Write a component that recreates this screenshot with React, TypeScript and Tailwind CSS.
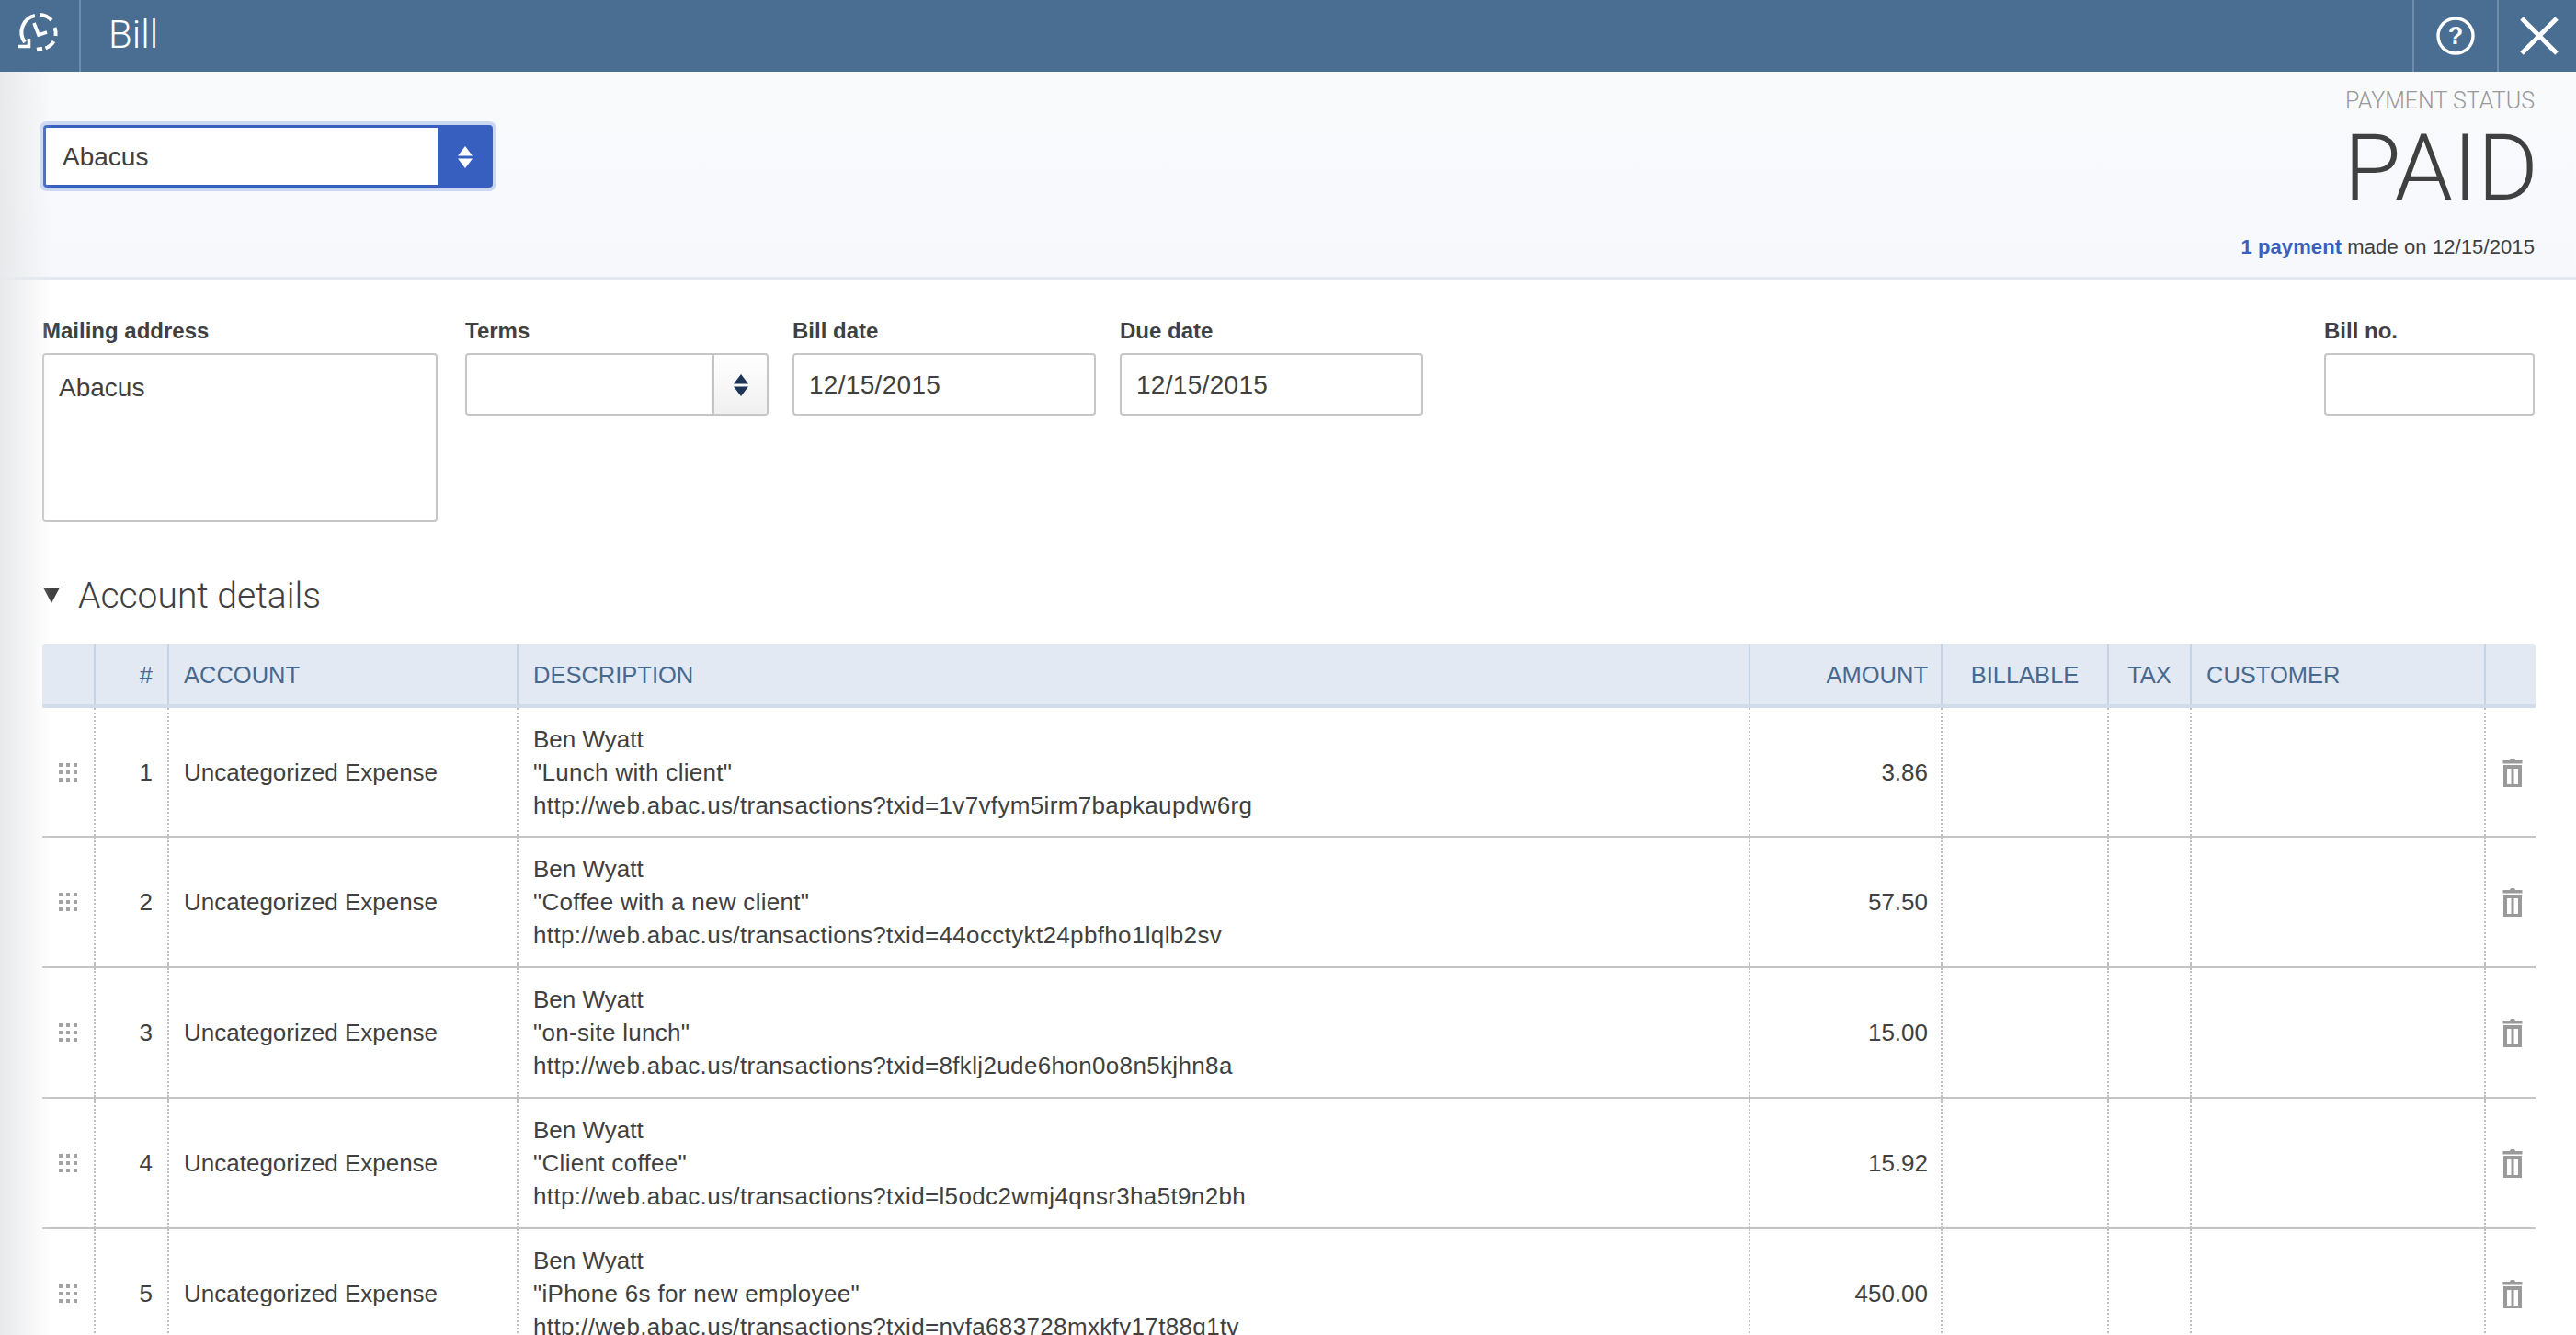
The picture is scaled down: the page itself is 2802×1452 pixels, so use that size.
const sans = "font-['Liberation_Sans',Arial,sans-serif]";

const rows = [
  { n: 1, note: '"Lunch with client"', id: "1v7vfym5irm7bapkaupdw6rg", amount: "3.86" },
  { n: 2, note: '"Coffee with a new client"', id: "44occtykt24pbfho1lqlb2sv", amount: "57.50" },
  { n: 3, note: '"on-site lunch"', id: "8fklj2ude6hon0o8n5kjhn8a", amount: "15.00" },
  { n: 4, note: '"Client coffee"', id: "l5odc2wmj4qnsr3ha5t9n2bh", amount: "15.92" },
  { n: 5, note: '"iPhone 6s for new employee"', id: "nyfa683728mxkfy17t88q1tv", amount: "450.00" },
];

function Logo() {
  return (
    <svg width="80" height="70" viewBox="0 0 80 70" fill="none" stroke="white" strokeWidth="4">
      <path d="M17 41 A18.5 18.5 0 0 1 28 12" />
      <path d="M33 11 A18.5 18.5 0 0 1 46 17" />
      <path d="M49.5 25 A18.5 18.5 0 0 1 50.5 34" />
      <path d="M48.5 40 A18.5 18.5 0 0 1 39.5 47.5" />
      <path d="M30 49 L36 48" strokeWidth="4.5" />
      <path d="M10 45.5 H21.5 V37" strokeWidth="3.6" />
      <path d="M27 20 L32 33 L41 30" strokeWidth="3.6" />
    </svg>
  );
}

function UpDown({ className }: { className: string }) {
  return (
    <svg width="16" height="24" viewBox="0 0 16 24" className={className}>
      <path d="M8 0 L16 10.5 H0 Z M0 13.5 H16 L8 24 Z" fill="currentColor" />
    </svg>
  );
}

function Grip() {
  return (
    <div className="grid grid-cols-3 gap-1 w-5 mx-auto">
      {Array.from({ length: 9 }).map((_, i) => (
        <span key={i} className="w-1 h-1 bg-[#a3a3a3]" />
      ))}
    </div>
  );
}

function Trash() {
  return (
    <svg width="22" height="32" viewBox="0 0 22 32" className="mx-auto">
      <path d="M0.5 3 H8 L9 1 H13 L14 3 H21.5 V6.5 H0.5 Z" fill="#9a9a9a" />
      <path
        fillRule="evenodd"
        d="M1 8 H21 V32 H1 Z M5 12 V29 H9.5 V12 Z M12.5 12 V29 H17 V12 Z"
        fill="#9a9a9a"
      />
    </svg>
  );
}

function Field({ label, value, className }: { label: string; value?: string; className: string }) {
  return (
    <div className={className}>
      <div className="pt-[1px] h-[28px] text-[24px] leading-[28px] font-bold text-[#404040] mb-[11px]">{label}</div>
      <div className="h-[68px] px-[16px] pt-[1px] flex items-center bg-white border-2 border-[#c6c6c6] rounded text-[28px] tracking-[0.3px] text-[#404040]">
        {value}
      </div>
    </div>
  );
}

export default function App() {
  return (
    <div className={`relative w-[2802px] h-[1452px] overflow-hidden bg-white text-[#404040] ${sans}`}>
      {/* Top bar */}
      <div className="flex h-[78px] bg-[#4a6d92] text-white">
        <div className="w-[88px] border-r-2 border-[#6f8cab] pl-[10px] pt-[5px]">
          <Logo />
        </div>
        <div className="pl-[30px] pb-[3px] flex items-center text-[42px] font-light font-['Roboto',sans-serif]">Bill</div>
        <div className="ml-auto w-[94px] border-l-2 border-r-2 border-[#6f8cab] flex items-center justify-center">
          <svg width="42" height="42" viewBox="0 0 42 42">
            <circle cx="21" cy="21" r="19" fill="none" stroke="white" strokeWidth="3.4" />
            <text x="21" y="30" textAnchor="middle" fontSize="27" fontWeight="700" fill="white" fontFamily="Liberation Sans">?</text>
          </svg>
        </div>
        <div className="w-[84px] flex items-center justify-center pl-[4px]">
          <svg width="42" height="42" viewBox="0 0 42 42" stroke="white" strokeWidth="5">
            <path d="M2 2 L40 40 M40 2 L2 40" />
          </svg>
        </div>
      </div>

      {/* Vendor and payment status */}
      <div className="flex justify-between h-[226px] pl-[47px] pr-[45px] bg-gradient-to-b from-[#f9fafc] to-[#f6f8fb] border-b-[3px] border-[#e3e9f1]">
        <div className="mt-[58px] flex w-[489px] h-[68px] rounded border-[3px] border-[#375fbf] ring-4 ring-[#cbd8f2] bg-white">
          <div className="flex-1 flex items-center pl-[18px] pt-[1px] text-[28px]">Abacus</div>
          <div className="w-[57px] flex items-center justify-center pl-[2px] pt-[1px] bg-[#375fbf]">
            <UpDown className="text-white" />
          </div>
        </div>
        <div className="flex flex-col items-end pt-[17px]">
          <div className="text-[25px] leading-[30px] font-light text-[#999999] font-['Roboto',sans-serif]">PAYMENT STATUS</div>
          <div className="mt-[10px] mr-[-4px] text-[101px] leading-[96px] font-light text-[#404040] font-['Roboto',sans-serif]">PAID</div>
          <div className="mt-[24px] text-[22px] leading-[28px] tracking-[0.1px]">
            <span className="font-bold text-[#3a5fbd]">1 payment</span> made on 12/15/2015
          </div>
        </div>
      </div>

      {/* Bill fields */}
      <div className="flex pt-[41px] pl-[46px] pr-[45px] gap-[26px]">
        <div className="w-[430px] mr-[4px]">
          <div className="pt-[1px] h-[28px] text-[24px] leading-[28px] font-bold mb-[11px]">Mailing address</div>
          <div className="h-[184px] px-[16px] py-[20px] border-2 border-[#c6c6c6] rounded text-[28px] leading-[32px]">Abacus</div>
        </div>
        <div className="w-[330px]">
          <div className="pt-[1px] h-[28px] text-[24px] leading-[28px] font-bold mb-[11px]">Terms</div>
          <div className="flex h-[68px] border-2 border-[#c6c6c6] rounded">
            <div className="flex-1 border-r-2 border-[#c6c6c6]" />
            <div className="w-[57px] flex items-center justify-center pt-[1px] bg-gradient-to-b from-white to-[#f0f0f0] rounded-r">
              <UpDown className="text-[#1d3557]" />
            </div>
          </div>
        </div>
        <Field label="Bill date" value="12/15/2015" className="w-[330px]" />
        <Field label="Due date" value="12/15/2015" className="w-[330px]" />
        <Field label="Bill no." className="w-[229px] ml-auto" />
      </div>

      {/* Account details heading */}
      <div className="flex items-center h-[50px] mt-[54px] ml-[47px]">
        <svg width="18" height="17" viewBox="0 0 18 17" className="mr-[20px]">
          <path d="M0 0 H18 L9 17 Z" fill="#404040" />
        </svg>
        <span className="pt-[2px] text-[39px] font-light font-['Roboto',sans-serif]">Account details</span>
      </div>

      {/* Lines table */}
      <table className="table-fixed w-[2712px] ml-[46px] mt-[28px]">
        <colgroup>
          <col className="w-[57px]" />
          <col className="w-[80px]" />
          <col className="w-[380px]" />
          <col className="w-[1340px]" />
          <col className="w-[209px]" />
          <col className="w-[181px]" />
          <col className="w-[90px]" />
          <col className="w-[320px]" />
          <col className="w-[55px]" />
        </colgroup>
        <thead>
          <tr className="h-[68px] bg-[#e2e9f3] text-[25.5px] font-normal text-[#47698f] border-b-4 border-[#cfdce9]">
            <th className="border-r-2 border-[#c3d4e6] rounded-tl" />
            <th className="border-r-2 border-[#c3d4e6] pr-[16px] pt-[2px] text-right font-normal">#</th>
            <th className="border-r-2 border-[#c3d4e6] pl-[16px] pt-[2px] text-left font-normal">ACCOUNT</th>
            <th className="border-r-2 border-[#c3d4e6] pl-[16px] pt-[2px] text-left font-normal">DESCRIPTION</th>
            <th className="border-r-2 border-[#c3d4e6] pr-[14px] pt-[2px] text-right font-normal">AMOUNT</th>
            <th className="border-r-2 border-[#c3d4e6] pt-[2px] text-center font-normal">BILLABLE</th>
            <th className="border-r-2 border-[#c3d4e6] pt-[2px] text-center font-normal">TAX</th>
            <th className="border-r-2 border-[#c3d4e6] pl-[16px] pt-[2px] text-left font-normal">CUSTOMER</th>
            <th className="rounded-tr" />
          </tr>
        </thead>
        <tbody className="text-[26px] leading-[36px] text-[#404040]">
          {rows.map((r) => (
            <tr key={r.n} className="h-[142px] border-b-2 border-[#c4c4c4]">
              <td className="border-r-2 border-dotted border-[#bdbdbd]">
                <Grip />
              </td>
              <td className="border-r-2 border-dotted border-[#bdbdbd] pr-[16px] text-right">{r.n}</td>
              <td className="border-r-2 border-dotted border-[#bdbdbd] pl-[16px]">Uncategorized Expense</td>
              <td className="border-r-2 border-dotted border-[#bdbdbd] pl-[16px]">
                <div>Ben Wyatt</div>
                <div className="tracking-[0.3px]">{r.note}</div>
                <div className="tracking-[0.35px]">http://web.abac.us/transactions?txid={r.id}</div>
              </td>
              <td className="border-r-2 border-dotted border-[#bdbdbd] pr-[14px] text-right">{r.amount}</td>
              <td className="border-r-2 border-dotted border-[#bdbdbd]" />
              <td className="border-r-2 border-dotted border-[#bdbdbd]" />
              <td className="border-r-2 border-dotted border-[#bdbdbd]" />
              <td className="pl-[3px]">
                <Trash />
              </td>
            </tr>
          ))}
        </tbody>
      </table>

      {/* Soft shadow along the left edge */}
      <div className="absolute left-0 top-[78px] bottom-0 w-[56px] bg-gradient-to-r from-[#e8e9eb] to-transparent pointer-events-none" />
    </div>
  );
}
